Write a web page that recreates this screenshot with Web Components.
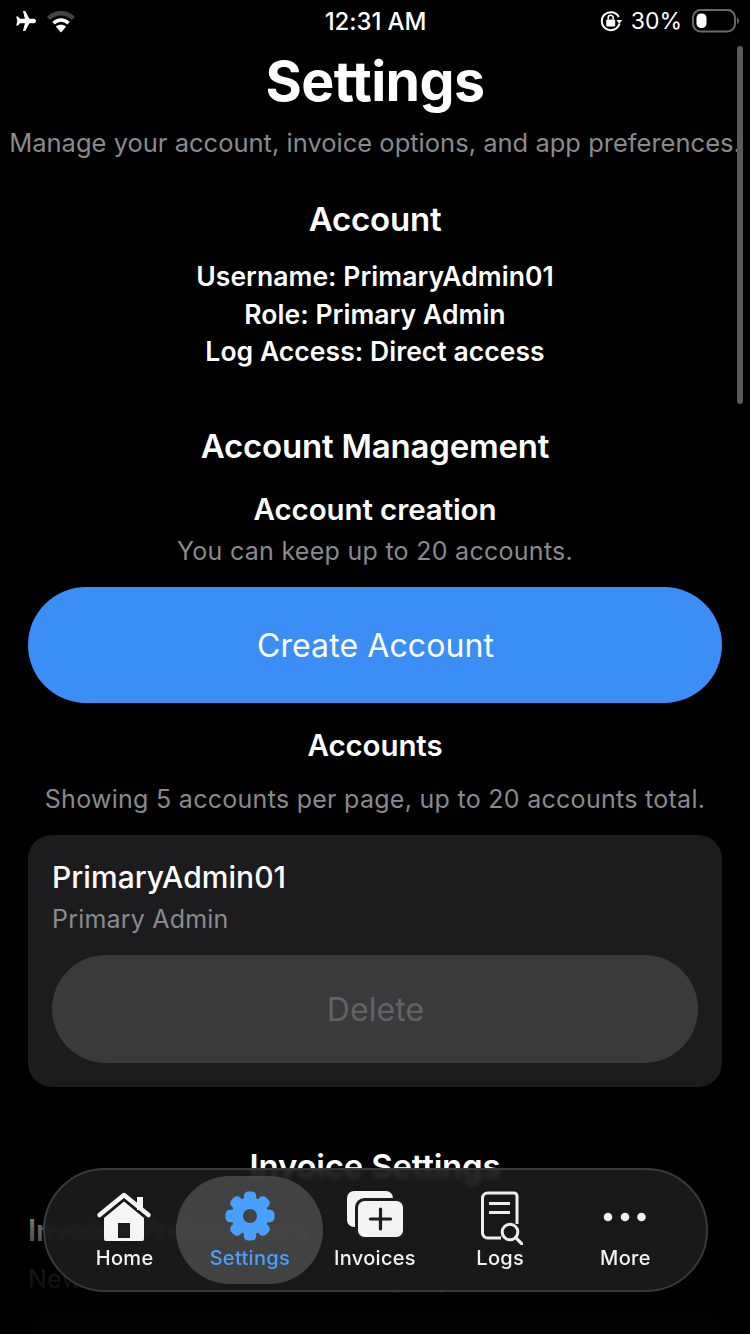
<!DOCTYPE html>
<html lang="en"><head><meta charset="utf-8"><title>Settings</title>
<style>
html,body{margin:0;padding:0;background:#000;height:1334px;overflow:hidden}
body{font-family:Inter,"Liberation Sans",sans-serif;color:#fff;-webkit-font-smoothing:antialiased}
</style></head><body>
<settings-app>
  <status-bar slot="status"></status-bar>
  <page-title slot="title" sub="Manage your account, invoice options, and app preferences.">Settings</page-title>

  <section-block slot="main" heading="Account" class="account" style="--top:40px">
    <info-lines>
      <div>Username: PrimaryAdmin01</div>
      <div>Role: Primary Admin</div>
      <div>Log Access: Direct access</div>
    </info-lines>
  </section-block>

  <section-block slot="main" heading="Account Management" style="--top:55px">
    <sub-block heading="Account creation" note="You can keep up to 20 accounts." style="--head-top:25px;--note-top:9px"></sub-block>
    <action-button kind="primary">Create Account</action-button>
    <sub-block heading="Accounts" note="Showing 5 accounts per page, up to 20 accounts total." style="--head-top:24px;--note-top:21px"></sub-block>
    <account-card name="PrimaryAdmin01" role="Primary Admin"></account-card>
  </section-block>

  <section-block slot="main" heading="Invoice Settings" style="--top:59px">
    <sub-block align="left" heading="Invoice Preferences" note="New invoices use these settings by default." style="--head-top:26px;--note-top:16px"></sub-block>
    <blank-card></blank-card>
  </section-block>

  <tab-bar slot="tabs">
    <tab-item label="Home" icon="home" style="--dy:4px"></tab-item>
    <tab-item label="Settings" icon="gear" active style="--dy:2px"></tab-item>
    <tab-item label="Invoices" icon="invoices"></tab-item>
    <tab-item label="Logs" icon="logs" style="--dy:3.500px"></tab-item>
    <tab-item label="More" icon="more" style="--dy:3px"></tab-item>
  </tab-bar>
</settings-app>

<script>
const mk=(name,html,setup)=>customElements.define(name,class extends HTMLElement{
  connectedCallback(){
    if(this.shadowRoot)return;
    const r=this.attachShadow({mode:'open'});
    r.innerHTML=typeof html==='function'?html(this):html;
    if(setup)setup(r,this);
  }
});

mk('settings-app',`<style>
:host{display:block;position:relative;width:750px;height:1334px;overflow:hidden;background:#000}
.fade{position:absolute;left:0;right:0;top:1168px;bottom:0;pointer-events:none;
 background:linear-gradient(to bottom,rgba(0,0,0,0) 0,rgba(0,0,0,.62) 60px,rgba(0,0,0,.86) 112px,rgba(0,0,0,.95) 166px)}
.scroll{position:absolute;left:737px;top:46px;width:6px;height:358px;border-radius:3px;background:#5a5a5c}
</style>
<slot name="status"></slot><slot name="title"></slot><slot name="main"></slot>
<div class="fade"></div><div class="scroll"></div><slot name="tabs"></slot>`);

mk('status-bar',`<style>
:host{display:grid;grid-template-columns:1fr auto 1fr;align-items:center;height:42px;padding:0 13px 0 15px;box-sizing:border-box;font-size:24px;color:#fff}
.l,.r{display:flex;align-items:center}
.l{gap:10px}.r{justify-content:flex-end;gap:0}
.t{letter-spacing:-.1px;font-weight:500;margin-left:-1px}
.pct{margin:0 10px 0 8px;font-weight:400;font-size:23px}
svg{display:block}
</style>
<div class="l">
<svg width="21" height="20" viewBox="0 0 21 20"><path fill="#fff" d="M8 0h2.2L14.4 7.8H18.5C20 7.8 21 8.8 21 10S20 12.2 18.5 12.2H14.4L10.2 20H8L9.9 12.2H5L3 14.6H1.2L2.3 10 1.2 5.4H3L5 7.8H9.9Z"/></svg>
<svg width="30" height="23" viewBox="0 0 30 23"><path d="M2.5 8.5C9.5 1.500 20.500 1.500 27.500 8.500" fill="none" stroke="#444" stroke-width="4.500"/><path d="M7.500 13.200C12 9 18 9 22.500 13.200" fill="none" stroke="#fff" stroke-width="3.500"/><path fill="#fff" d="M9.800 16.500C12.800 14.300 17.200 14.300 20.200 16.500L15 22.500Z"/></svg>
</div>
<div class="t">12:31 AM</div>
<div class="r">
<svg width="23" height="22" viewBox="0 0 23 22"><path d="M18.800 7A9 9 0 1 0 19.500 13.500" fill="none" stroke="#fff" stroke-width="2"/><path fill="#fff" d="M16.300 10h6l-3 3.800z"/><rect x="6.200" y="9.500" width="9" height="7" rx="1.200" fill="#fff"/><path d="M8.200 9.500V7.800a2.500 2.500 0 0 1 5 0V9.500" fill="none" stroke="#fff" stroke-width="1.600"/></svg>
<span class="pct">30%</span>
<svg width="47" height="24" viewBox="0 0 47 24" style="margin-right:-2px"><rect x="1" y="1" width="42" height="21.500" rx="7.500" fill="none" stroke="#6a6a6a" stroke-width="2"/><rect x="4.500" y="4.500" width="10" height="14.500" rx="4.500" fill="#fff"/><path d="M45 8.500c1.300.5 2 1.800 2 3.200s-.7 2.800-2 3.300z" fill="#6a6a6a"/></svg>
</div>`);

mk('page-title',el=>`<style>
:host{display:block;text-align:center;padding-top:7px}
h1{margin:0;font-size:55.500px;line-height:64px;font-weight:700;letter-spacing:-.6px;color:#fff}
p{margin:14px -20px 0;font-size:25.500px;line-height:32px;color:#8a8a8e;letter-spacing:.01px;white-space:nowrap}
</style><h1><slot></slot></h1><p>${el.getAttribute('sub')}</p>`);

mk('section-block',el=>`<style>
:host{display:block;margin-top:var(--top,0);padding:0 28px}
h2{margin:0;text-align:center;font-size:33px;line-height:40px;font-weight:600;letter-spacing:-.2px;color:#fff}
</style><h2>${el.getAttribute('heading')}</h2><slot></slot>`);

mk('info-lines',`<style>
:host{display:block;margin-top:19px;text-align:center;font-size:26.500px;line-height:37.500px;font-weight:600;letter-spacing:.05px;color:#fff}
</style><slot></slot>`);

mk('sub-block',el=>`<style>
:host{display:block;text-align:${el.getAttribute('align')||'center'}}
h3{margin:var(--head-top,0) 0 0;font-size:29.500px;line-height:36px;font-weight:600;letter-spacing:-.1px;color:#fff}
p{margin:var(--note-top,0) -10px 0 0;font-size:25px;line-height:30px;color:#8a8a8e;letter-spacing:.28px;white-space:nowrap}
:host(:not([align])) p{margin-left:-10px}
</style><h3>${el.getAttribute('heading')}</h3><p>${el.getAttribute('note')}</p>`);

mk('action-button',el=>`<style>
:host{display:flex;align-items:center;justify-content:center;box-sizing:border-box;font-size:32px;font-weight:400;letter-spacing:.1px;padding:2px 0 0 1px}
:host([kind=primary]){height:116px;margin-top:21px;border-radius:58px;background:#3b8ef6;color:#fff}
:host([kind=muted]){height:108px;border-radius:54px;background:#3a3a3c;color:#636366}
</style><slot></slot>`);

mk('account-card',el=>`<style>
:host{display:block;box-sizing:border-box;height:252px;margin-top:21px;padding:24px;background:#1c1c1e;border-radius:24px}
.n{font-size:30px;line-height:36px;font-weight:500;letter-spacing:.05px;color:#fff}
.r{margin-top:9px;font-size:25px;line-height:30px;letter-spacing:.2px;color:#8a8a8e}
action-button{margin-top:21px}
</style><div class="n">${el.getAttribute('name')}</div><div class="r">${el.getAttribute('role')}</div>
<action-button kind="muted">Delete</action-button>`);

mk('blank-card',`<style>
:host{display:block;height:200px;margin-top:18px;background:#1c1c1e;border-radius:24px}
</style>`);

mk('tab-bar',`<style>
:host{position:absolute;left:43px;top:1168px;width:665px;height:124px;box-sizing:border-box;display:flex;align-items:stretch;padding:0 18px 0 17px;
 border:2px solid #3a3a3b;border-radius:62px;background:rgba(27,27,27,.9);-webkit-backdrop-filter:blur(2.500px);backdrop-filter:blur(2.500px)}
</style><slot></slot>`);

const icons={
home:`<svg width="60" height="52" viewBox="0 0 60 52"><path d="M4.500 23 29 3 53.500 23" fill="none" stroke="#f5f5f5" stroke-width="4.500" stroke-linecap="round" stroke-linejoin="round"/><rect x="42" y="5" width="6" height="13" fill="#f5f5f5"/><path fill="#f5f5f5" fill-rule="evenodd" d="M29 9.500 49 26V47a2 2 0 0 1-2 2H11a2 2 0 0 1-2-2V26ZM23 31V46H35V31Z"/></svg>`,
gear:`<svg width="52" height="52" viewBox="-26 -26 52 52"><g fill="#4aa0ff">${[0,45,90,135,180,225,270,315].map(a=>`<rect x="-6.200" y="-24.500" width="12.400" height="12" rx="4.500" transform="rotate(${a})"/>`).join('')}</g><circle r="12.800" fill="none" stroke="#4aa0ff" stroke-width="11.500"/></svg>`,
invoices:`<svg width="60" height="50" viewBox="0 0 60 50"><rect x="2" y="2" width="46" height="36" rx="7" fill="#f3f3f3"/><rect x="11.500" y="10.500" width="48" height="39" rx="8" fill="#f3f3f3" stroke="#1c1c1c" stroke-width="3"/><path d="M35.500 20V40M25.500 30H45.500" stroke="#1c1c1c" stroke-width="3.200" stroke-linecap="round"/></svg>`,
logs:`<svg width="46" height="54" viewBox="0 0 46 54"><path d="M24 47H10.500a5 5 0 0 1-5-5V7a5 5 0 0 1 5-5H37a3 3 0 0 1 3 3V33" fill="none" stroke="#ededed" stroke-width="3"/><path d="M12 12.500H33M12 21.500H33" stroke="#ededed" stroke-width="3"/><circle cx="33" cy="41" r="7.800" fill="none" stroke="#ededed" stroke-width="3"/><path d="M38.700 46.700 45 53" stroke="#ededed" stroke-width="3.200" stroke-linecap="round"/></svg>`,
more:`<svg width="46" height="10" viewBox="0 0 46 10"><circle cx="6" cy="5" r="4.300" fill="#f0f0f0"/><circle cx="23" cy="5" r="4.300" fill="#f0f0f0"/><circle cx="39.500" cy="5" r="4.300" fill="#f0f0f0"/></svg>`
};
mk('tab-item',el=>`<style>
:host{flex:1 1 0;position:relative;display:block;color:#f2f2f2;font-size:20px;font-weight:500;letter-spacing:.3px}
:host([active]){color:#4aa0ff}
:host([active])::before{content:"";position:absolute;left:-11px;right:-11px;top:6px;height:108px;border-radius:54px;background:rgba(105,105,105,.52)}
.i{position:absolute;left:0;right:0;top:calc(16px + var(--dy,0px));height:56px;display:flex;align-items:center;justify-content:center}
.l{position:absolute;left:-20px;right:-20px;top:76px;line-height:24px;text-align:center;white-space:nowrap}
svg{display:block}
</style><div class="i">${icons[el.getAttribute('icon')]}</div><div class="l">${el.getAttribute('label')}</div>`);
</script>
</body></html>
